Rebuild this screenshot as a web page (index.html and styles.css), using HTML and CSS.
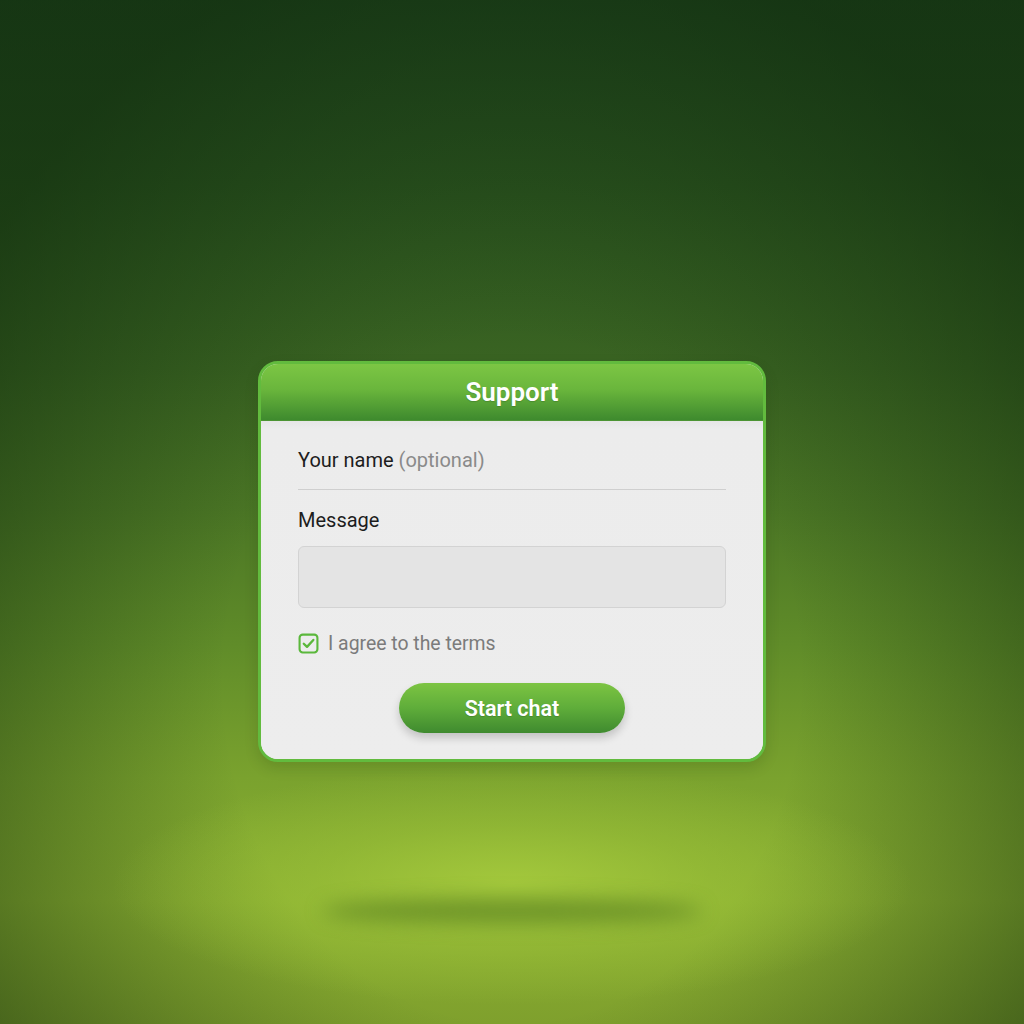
FILE: index.html
```html
<!DOCTYPE html>
<html lang="en">
<head>
<meta charset="utf-8">
<title>Support</title>
<link rel="stylesheet" href="styles.css">
</head>
<body>
<main class="stage">
  <section class="card">
    <header class="card-head">Support</header>
    <div class="card-body">
      <div class="field-name">Your name <span class="muted">(optional)</span></div>
      <div class="divider"></div>
      <div class="label">Message</div>
      <div class="textarea"></div>
      <label class="agree">
        <span class="check">
          <svg viewBox="0 0 20 20" width="21" height="21"><rect x="1.5" y="1.5" width="17" height="17" rx="3" fill="none" stroke="#5bb83c" stroke-width="2"/><path d="M5.5 10.2 L8.6 13.2 L14.6 6.6" fill="none" stroke="#5bb83c" stroke-width="2.2" stroke-linecap="round" stroke-linejoin="round"/></svg>
        </span>
        <span class="agree-text">I agree to the terms</span>
      </label>
      <div class="actions"><button class="btn">Start chat</button></div>
    </div>
  </section>
  <div class="floor-shadow"></div>
</main>
</body>
</html>
```
FILE: styles.css
```css
* { box-sizing: border-box; }
html, body { margin: 0; padding: 0; }
body {
  width: 1024px;
  height: 1024px;
  overflow: hidden;
  font-family: Roboto, "Liberation Sans", Arial, sans-serif;
  background:
    radial-gradient(ellipse 400px 120px at 50% 885px, rgba(168,205,62,0.85) 0%, rgba(160,198,58,0.45) 50%, rgba(150,190,55,0) 100%),
    radial-gradient(ellipse 640px 760px at 50% 680px, rgba(0,0,0,0) 45%, rgba(12,38,10,0.55) 100%),
    linear-gradient(to bottom, #22491f 0%, #2b541f 18%, #3a6422 36%, #4b7625 50%, #608c29 63%, #7aa22e 76%, #8bb032 88%, #7fa02d 100%);
}
.stage {
  display: flex;
  flex-direction: column;
  align-items: center;
  padding-top: 361px;
}
.card {
  width: 508px;
  border: 3px solid #62bb3e;
  border-radius: 20px;
  background: #ebebeb;
  overflow: hidden;
  box-shadow: 0 6px 14px rgba(20,50,10,0.15);
}
.card-head {
  height: 57px;
  display: flex;
  align-items: center;
  justify-content: center;
  color: #fff;
  font-size: 26px;
  font-weight: 600;
  background: linear-gradient(to bottom, #7cc644 0%, #6ab63c 45%, #3e8a2e 100%);
  border-bottom: 1px solid #4c9433;
  text-shadow: 0 1px 1px rgba(0,0,0,0.15);
}
.card-body {
  padding: 27px 37px 26px 37px;
  background: linear-gradient(to bottom, #e6e6e6 0, #ececec 8px, #ededed 100%);
}
.field-name {
  font-size: 20px;
  color: #1d1d1d;
  line-height: 25px;
}
.muted { color: #8a8a8a; }
.divider {
  height: 1px;
  background: #cfcfcf;
  margin-top: 16px;
}
.label {
  margin-top: 18px;
  font-size: 20px;
  color: #1d1d1d;
  line-height: 25px;
}
.textarea {
  margin-top: 13px;
  height: 62px;
  border: 1px solid #d3d3d3;
  border-radius: 6px;
  background: #e4e4e4;
}
.agree {
  display: flex;
  align-items: center;
  gap: 9px;
  margin-top: 24px;
}
.check { display: flex; width: 21px; height: 21px; }
.agree-text {
  font-size: 19.4px;
  color: #7b7b7b;
}
.actions {
  display: flex;
  justify-content: center;
  margin-top: 28px;
}
.btn {
  width: 226px;
  height: 50px;
  border: none;
  border-radius: 25px;
  color: #fff;
  font-family: Roboto, "Liberation Sans", Arial, sans-serif;
  font-size: 21.5px;
  font-weight: 600;
  background: linear-gradient(to bottom, #7cc442 0%, #5fad3a 50%, #3f8a2f 100%);
  box-shadow: 0 5px 8px rgba(0,0,0,0.18);
  text-shadow: 0 1px 1px rgba(0,0,0,0.15);
}
.floor-shadow {
  margin-top: 137px;
  width: 380px;
  height: 24px;
  border-radius: 50%;
  background: rgba(70,110,25,0.55);
  filter: blur(10px);
}
```
